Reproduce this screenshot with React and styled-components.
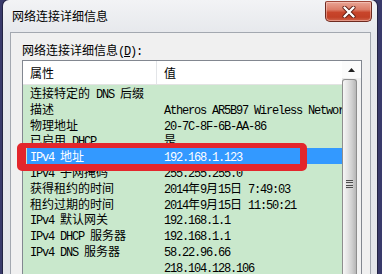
import React from "react";
import styled, { createGlobalStyle } from "styled-components";

const GlobalStyle = createGlobalStyle`
  html, body { margin: 0; padding: 0; background: #38396a; }
  body { font-family: "Noto Sans CJK SC", "Noto Sans", sans-serif; font-size: 12px; overflow: hidden; }
`;

const Desktop = styled.div`
  position: relative;
  width: 382px;
  height: 274px;
  overflow: hidden;
  box-sizing: border-box;
  padding: 0 5px 0 3px;
  display: flex;
  background: #393a6b;
`;

const Window = styled.div`
  flex: 1;
  display: flex;
  flex-direction: column;
  border-radius: 6px 6px 0 0;
  background: linear-gradient(#f2f3f5, #e6e8ec 34px, #e4e6ea);
  box-shadow: 0 0 0 1px rgba(25, 25, 50, 0.7);
`;

const TitleBar = styled.div`
  height: 32px;
  flex: none;
  display: flex;
  align-items: flex-start;
  justify-content: space-between;
  padding: 0 5px 0 9px;
`;

const TitleText = styled.div`
  margin-top: 9px;
  line-height: 14px;
  font-size: 12px;
  color: #000;
`;

const CloseButton = styled.div`
  width: 47px;
  height: 21px;
  margin-top: 1px;
  box-sizing: border-box;
  border: 1px solid #6e2a20;
  border-top-color: #a0483a;
  border-radius: 2px 2px 5px 5px;
  background: linear-gradient(#e9a595 0%, #dc7d68 40%, #c8452b 55%, #c24026 80%, #d0644c 100%);
  box-shadow: inset 0 0 0 1px rgba(255, 220, 210, 0.45);
  display: flex;
  align-items: center;
  justify-content: center;
`;

const Body = styled.div`
  flex: 1;
  display: flex;
  padding: 0 6px 0 7px;
`;

const Panel = styled.div`
  flex: 1;
  display: flex;
  flex-direction: column;
  background: #f0f0f0;
  border: 1px solid #a3a8b0;
  border-bottom: none;
  padding: 0 8px 0 11px;
`;

const Label = styled.div`
  height: 27px;
  box-sizing: border-box;
  padding-top: 10px;
  line-height: 14px;
  white-space: pre;
  color: #000;
  u { text-decoration: underline; text-underline-offset: 1px; }
`;

const List = styled.div`
  flex: none;
  height: 240px;
  border: 1px solid #828790;
  background: #c9e8cc;
  display: grid;
  grid-template-columns: 1fr 19px;
  overflow: hidden;
`;

const Content = styled.div`
  display: flex;
  flex-direction: column;
  overflow: hidden;
`;

const Header = styled.div`
  height: 23px;
  flex: none;
  background: #fff;
  border-bottom: 1px solid #e3e3e3;
  display: grid;
  grid-template-columns: 134px 1fr;
`;

const HeaderCell = styled.div`
  padding-left: 7px;
  line-height: 23px;
  color: #000;
  border-right: ${(p) => (p.$sep ? "1px solid #e3e5e8" : "none")};
`;

const Row = styled.div`
  flex: none;
  height: 15.8px;
  margin-left: 4px;
  display: grid;
  grid-template-columns: 130px 1fr;
  line-height: 15.8px;
  white-space: pre;
  background: ${(p) => (p.$selected ? "#3399ff" : "transparent")};
  color: ${(p) => (p.$selected ? "#fff" : "#000")};
`;

const Cell = styled.div`
  padding-left: ${(p) => (p.$first ? 3 : 7)}px;
  overflow: hidden;
`;

const Asc = styled.span`
  font-family: "Liberation Mono", monospace;
  font-size: 12px;
  letter-spacing: -1.2px;
`;

const Scrollbar = styled.div`
  display: flex;
  flex-direction: column;
  background: linear-gradient(to right, #e6e6e6, #f4f4f4 60%, #f0f0f0);
`;

const UpButton = styled.div`
  height: 17px;
  flex: none;
  display: flex;
  align-items: center;
  justify-content: center;
  background: #fbfbfb;
`;

const Thumb = styled.div`
  flex: 1;
  margin: 1px 4px 0 0;
  border: 1px solid #8e8e8e;
  border-bottom: none;
  border-radius: 3px 3px 0 0;
  background: linear-gradient(to right, #f6f6f6 0%, #e4e4e4 35%, #cfcfcf 70%, #b6b6b6 100%);
  display: flex;
  flex-direction: column;
  align-items: center;
`;

const Grip = styled.div`
  width: 7px;
  height: 9px;
  margin-top: 100px;
  background: repeating-linear-gradient(#4d4d4d 0 1px, #d8d8d8 1px 2px, transparent 2px 2.5px);
`;

const Annotation = styled.div`
  position: absolute;
  left: 17px;
  top: 143px;
  width: 290px;
  height: 28px;
  box-sizing: border-box;
  border-style: solid;
  border-color: #e3262c;
  border-width: 5px 7px 7px 9px;
  border-radius: 5px;
`;

const Mixed = ({ text }) =>
  text
    .split(/([\x20-\x7E]+)/)
    .filter(Boolean)
    .map((s, i) =>
      /^[\x20-\x7E]+$/.test(s) ? <Asc key={i}>{s}</Asc> : <span key={i}>{s}</span>
    );

const rows = [
  ["连接特定的 DNS 后缀", ""],
  ["描述", "Atheros AR5B97 Wireless Network Adapter"],
  ["物理地址", "20-7C-8F-6B-AA-86"],
  ["已启用 DHCP", "是"],
  ["IPv4 地址", "192.168.1.123", true],
  ["IPv4 子网掩码", "255.255.255.0"],
  ["获得租约的时间", "2014年9月15日 7:49:03"],
  ["租约过期的时间", "2014年9月15日 11:50:21"],
  ["IPv4 默认网关", "192.168.1.1"],
  ["IPv4 DHCP 服务器", "192.168.1.1"],
  ["IPv4 DNS 服务器", "58.22.96.66"],
  ["", "218.104.128.106"],
];

export default function App() {
  return (
    <>
      <GlobalStyle />
      <Desktop>
        <Window>
          <TitleBar>
            <TitleText>网络连接详细信息</TitleText>
            <CloseButton>
              <svg width="14" height="12" viewBox="0 0 14 12">
                <path d="M2.5 1.5 L11.5 10.5 M11.5 1.5 L2.5 10.5" stroke="#5a1a10" strokeWidth="4" strokeLinecap="round" />
                <path d="M2.5 1.5 L11.5 10.5 M11.5 1.5 L2.5 10.5" stroke="#fff" strokeWidth="2.4" strokeLinecap="round" />
              </svg>
            </CloseButton>
          </TitleBar>
          <Body>
            <Panel>
              <Label>
                网络连接详细信息<Asc>(<u>D</u>):</Asc>
              </Label>
              <List>
                <Content>
                  <Header>
                    <HeaderCell $sep>属性</HeaderCell>
                    <HeaderCell>值</HeaderCell>
                  </Header>
                  {rows.map(([k, v, sel], i) => (
                    <Row key={i} $selected={sel}>
                      <Cell $first>
                        <Mixed text={k} />
                      </Cell>
                      <Cell>
                        <Mixed text={v} />
                      </Cell>
                    </Row>
                  ))}
                </Content>
                <Scrollbar>
                  <UpButton>
                    <svg width="7" height="4" viewBox="0 0 7 4">
                      <path d="M0 4 L3.5 0 L7 4 Z" fill="#222" />
                    </svg>
                  </UpButton>
                  <Thumb>
                    <Grip />
                  </Thumb>
                </Scrollbar>
              </List>
            </Panel>
          </Body>
        </Window>
        <Annotation />
      </Desktop>
    </>
  );
}
